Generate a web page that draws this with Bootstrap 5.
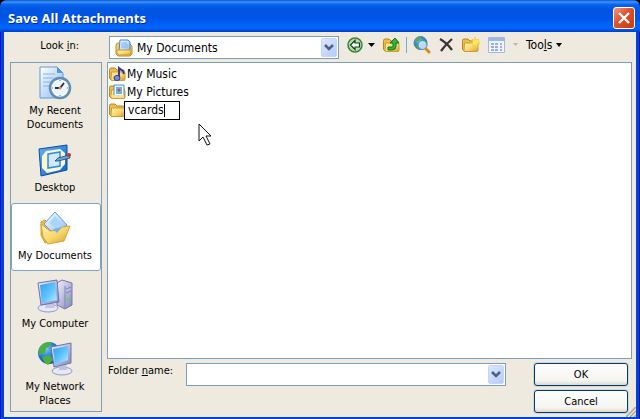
<!DOCTYPE html>
<html lang="en">
<head>
<meta charset="utf-8">
<meta name="viewport" content="width=device-width, initial-scale=1">
<title>Save All Attachments</title>
<link href="https://cdn.jsdelivr.net/npm/bootstrap@5.3.0/dist/css/bootstrap.min.css" rel="stylesheet">
<style>
body{background:#000;font-family:Tahoma,"DejaVu Sans Condensed","Noto Sans",sans-serif;font-size:11px;line-height:14px;color:#000}
svg{display:block;flex:none}
u{text-underline-offset:1px}
.dialog-frame{background:#0441d8;border-radius:7px 7px 0 0;padding:0 4px 4px;box-shadow:inset 1px 0 #0019cf,inset -1px -1px #00138c}
.title-strip{height:32px;margin:0 -4px;padding:3px 5px 0 8px;border-radius:7px 7px 0 0;background:linear-gradient(#0b52c8 0,#3d95ff 6%,#0a65ee 14%,#0055e1 28%,#0054e3 55%,#0062fb 78%,#0066ff 88%,#0049d3 97%,#003dca 100%)}
.title-strip h1{font-size:13px;line-height:18px;font-weight:700;color:#fff;text-shadow:1px 1px #0b2d86;font-family:"Noto Sans",sans-serif}
.close-btn{width:22px;height:22px;border:1px solid #fff;border-radius:3px;background:linear-gradient(135deg,#ee9a82,#e0502c 45%,#c93a12);padding:3px}
.dialog-face{background:#eeeadf}
.look-row{height:30px;padding-top:4px}
.look-label{width:105px;padding:3px 30px 0 0}
.combo{border:1px solid #7f9db9;background:#fff;height:23px;padding:1px}
.combo select{appearance:none;border:0;background:none;outline:0;min-width:0;padding:0;font-size:12px}
.look-combo{width:230px}
.drop{width:16px;height:19px;border-radius:2px;background:linear-gradient(135deg,#dce7ff,#b6cbfa);border:1px solid #c6d5f8;pointer-events:none}
.tool{border:0;background:none;padding:0;color:#000;font-size:12px}
.bar-rule{width:1px;height:16px;background:#7ba7e0;margin:0 6px}
.places{width:92px;border:1px solid #7f9db9;margin-left:6px;margin-bottom:5px}
.place{border:1px solid transparent;border-radius:3px;padding:0 2px 0 0;min-height:68px;color:#000;text-decoration:none;text-align:center}
.place.chosen{background:#fff;border-color:#7fa6c4}
.files{border:1px solid #7f9db9;background:#fff;padding:2px 1px;min-height:297px;font-size:12px}
.file-row{height:18px}
.rename{width:56px;height:19px;border:1px solid #000;background:#fff;padding-left:3px}
.rename input{width:36px;border:0;padding:0;outline:0;background:none;caret-color:transparent}
.caret-bar{width:1px;height:13px;background:#000}
.pointer{position:absolute;left:90px;top:60px}
.right-pane{margin:0 4px 0 5px}
.name-label{width:79px;padding:1px 0 0 1px}
.act{height:23px;width:94px;border:1px solid #003c74;border-radius:3px;background:linear-gradient(#fff,#f5f4ef 80%,#dcd8cc);padding:0;box-shadow:0 0 0 1px #a9bccd66}
.grip{position:absolute;right:0;bottom:0}
</style>
<script src="https://cdn.jsdelivr.net/npm/bootstrap@5.3.0/dist/js/bootstrap.bundle.min.js"></script>
</head>
<body>
<svg width="0" height="0" class="position-absolute" aria-hidden="true"><defs>
<linearGradient id="gold" x1="0" y1="0" x2="1" y2="1"><stop stop-color="#fff5b4"/><stop offset=".55" stop-color="#f9d66c"/><stop offset="1" stop-color="#d79b25"/></linearGradient>
<linearGradient id="screen" x1="0" y1="0" x2="1" y2="1"><stop stop-color="#2f9ff2"/><stop offset=".55" stop-color="#62c5fc"/><stop offset="1" stop-color="#b8f0ff"/></linearGradient>
<linearGradient id="paper" x1="0" y1="0" x2="1" y2="1"><stop stop-color="#fff"/><stop offset="1" stop-color="#88baf4"/></linearGradient>
<linearGradient id="blue" x1="0" y1="0" x2="1" y2="1"><stop stop-color="#62b3f4"/><stop offset="1" stop-color="#0862cc"/></linearGradient>
<linearGradient id="case" x1="0" y1="0" x2="1" y2="1"><stop stop-color="#f1f1fd"/><stop offset="1" stop-color="#8587bd"/></linearGradient>
<radialGradient id="sea" cx=".35" cy=".3" r=".75"><stop stop-color="#83cdff"/><stop offset=".5" stop-color="#247fe4"/><stop offset="1" stop-color="#113d9f"/></radialGradient>
<g id="folder"><path d="M.5 3.500q0-1.500 1.500-1.500h4l2 2h6q1.500 0 1.500 1.500v8.500H2L.5 12.500z" fill="#eebd4d" stroke="#b98522"/><path d="M2.500 6h12q1.500 0 1.500 1v6q0 1.500-1.500 1.500H3q-1 0-1-1z" fill="url(#gold)" stroke="#d09a30"/></g>
<path id="chevron" d="M1 1l4 4 4-4" fill="none" stroke="#4d6185" stroke-width="2.500"/>
</defs></svg>

<main class="dialog-frame min-vh-100 d-flex flex-column">
  <header class="title-strip d-flex align-items-center justify-content-between">
    <h1 class="m-0">Save All Attachments</h1>
    <button class="close-btn" type="button" aria-label="Close"><svg width="14" height="14" viewBox="0 0 14 14"><path d="M2 2l10 10M12 2L2 12" stroke="#fff" stroke-width="2.400"/></svg></button>
  </header>

  <div class="dialog-face position-relative flex-grow-1 d-flex flex-column">
    <div class="look-row d-flex">
      <label class="look-label text-end" for="look">Look <u>i</u>n:</label>
      <div class="combo look-combo d-flex align-items-center">
        <svg class="ms-1 me-1" width="18" height="18" viewBox="0 0 18 18"><path d="M1 7q0-3 2-3h11l3 3v8l-2 2H3l-2-2z" fill="#f6ce61" stroke="#bd8c2a"/><path d="M5 1h8l2 2v9H4z" fill="url(#paper)" stroke="#3c86d8"/><path d="M6 4h6M6 6h7M6 8h7" stroke="#80b5ee"/><path d="M2 11h13q2 0 1 2l-1 3H4q-1 0-2-2z" fill="url(#gold)" stroke="#d09a30"/></svg>
        <select id="look" class="flex-grow-1"><option>My Documents</option></select>
        <span class="drop d-flex align-items-center justify-content-center"><svg width="10" height="7"><use href="#chevron"/></svg></span>
      </div>
      <div class="d-flex align-items-center pb-2" role="toolbar" aria-label="Navigation">
        <button class="tool ms-2 d-flex align-items-center" type="button" aria-label="Back"><svg width="17" height="16" viewBox="0 0 17 16"><circle cx="8" cy="8" r="7" fill="#b7dcae" stroke="#358438" stroke-width="1.500"/><path d="M3.500 8L8 3.500V6h4.500v4H8v2.500z" fill="#fff" stroke="#173d18" stroke-width="1.200"/></svg><svg class="ms-1" width="7" height="4"><path d="M0 0h7L3.500 4z"/></svg></button>
        <button class="tool ms-2" type="button" aria-label="Up one level"><svg width="17" height="16" viewBox="0 0 17 16"><use href="#folder"/><path d="M5 13h4q4 0 4-4V6h3l-4-5-5 5h3v3q0 1-1 1H5z" fill="#37b33b" stroke="#13751c"/></svg></button>
        <span class="bar-rule"></span>
        <button class="tool" type="button" aria-label="Search the Web"><svg width="18" height="18" viewBox="0 0 18 18"><circle cx="7.500" cy="7" r="6.500" fill="url(#sea)" stroke="#4c83b5"/><path d="M2 4q3-4 6-3l-1 3-3 2zM10 2l3 3v3l-3-1zM2 8l4 1 1 4-3-1z" fill="#55ad3f"/><circle cx="9.500" cy="9" r="4.500" fill="#d3ecff" fill-opacity=".85" stroke="#5383af"/><path d="M13 13l3 3" stroke="#d78921" stroke-width="3" stroke-linecap="round"/></svg></button>
        <button class="tool ms-2" type="button" aria-label="Delete"><svg width="15" height="16" viewBox="0 0 15 16"><path d="M1 2q7 4 12 11M13 2Q7 7 2 14" fill="none" stroke="#343434" stroke-width="2.200"/></svg></button>
        <button class="tool ms-2" type="button" aria-label="New folder"><svg width="18" height="16" viewBox="0 0 18 16"><use href="#folder"/><path d="M13 0l1 3 3-1-1 3 2 1-3 1 1 3-3-2-2 2v-3l-3-1 3-1-1-3 3 1z" fill="#ffe95a" stroke="#f2bd27" stroke-width=".5"/></svg></button>
        <button class="tool ms-2 d-flex align-items-center" type="button" aria-label="Views"><svg width="17" height="16" viewBox="0 0 17 16"><path d="M.5.500h16v15H.5z" fill="#eff4ff" stroke="#a5b9df"/><path d="M1 1h15v3H1z" fill="#9bb8ec"/><path d="M3 7h3M7 7h3M12 7h2M3 10h3M7 10h3M12 10h2M3 13h3M7 13h3M12 13h2" stroke="#8099ca" stroke-width="1.500"/></svg><svg class="ms-2" width="5" height="4"><path d="M0 0h5L2.500 3z" fill="#bbb8ae"/></svg></button>
        <button class="tool ms-2 d-flex align-items-center" type="button"><span>Too<u>l</u>s</span><svg class="ms-1" width="6" height="4"><path d="M0 0h6L3 4z"/></svg></button>
      </div>
    </div>

    <div class="d-flex flex-grow-1">
      <nav class="places d-flex flex-column" aria-label="Places">
        <a href="#" class="place flex-fill d-flex flex-column align-items-center justify-content-center gap-1">
          <svg width="34" height="34" viewBox="0 0 34 34"><path d="M2 1h17l6 6v25H2z" fill="url(#paper)" stroke="#639ad6"/><path d="M19 1v6h6z" fill="#4f9ce9"/><path d="M5 8h12M5 12h10M5 16h8M5 20h6" stroke="#82b3e8"/><circle cx="22" cy="22" r="10" fill="#e8f4ff" stroke="#668cae" stroke-width="2.500"/><circle cx="22" cy="22" r="7.500" fill="none" stroke="#fff"/><path d="M26 17l-4 5h-5" fill="none" stroke="#19304b" stroke-width="1.800"/><path d="M22 14v1M22 29v1M14 22h1M29 22h1" stroke="#3976ac"/><circle cx="22" cy="22" r="1.500" fill="#ed8a27"/></svg>
          <span>My Recent<br>Documents</span></a>
        <a href="#" class="place flex-fill d-flex flex-column align-items-center justify-content-center gap-1">
          <svg width="34" height="34" viewBox="0 0 34 34"><path d="M1 6l28-4v25L3 33z" fill="url(#blue)" stroke="#0b4c9d"/><path d="M8 8l14-2 5 4v11l-5 6-13 3-5-5V13z" fill="#fff5cd"/><path d="M10 11l12-2v14l-12 2z" fill="#cfeaff" stroke="#2c8ce1" stroke-width="1.500"/><path d="M17 18l3-3 11-3 1 3-12 3z" fill="#69a9e4" stroke="#253d63" stroke-width=".8"/><circle cx="31" cy="12" r="2" fill="#cf3027"/></svg>
          <span>Desktop</span></a>
        <a href="#" class="place chosen flex-fill d-flex flex-column align-items-center justify-content-center gap-1" aria-current="page">
          <svg width="34" height="34" viewBox="0 0 34 34"><path d="M3 11l4-2 3 3 11 3-2 13-12 4-4-8z" fill="#eebb48" stroke="#d39a2a"/><path d="M17 1l12 13-12 10L6 13z" fill="url(#paper)" stroke="#5b9fe5"/><path d="M17 5l6 7-5 5-7-5z" fill="#a9d5fa"/><path d="M3 13l9 7 9-1 3-3 8-1-6 15-16 3-5-7z" fill="url(#gold)" stroke="#d7a038"/><path d="M15 18l9-2-5 6z" fill="#70b4ec"/></svg>
          <span class="text-nowrap">My Documents</span></a>
        <a href="#" class="place flex-fill d-flex flex-column align-items-center justify-content-center gap-1">
          <svg width="36" height="34" viewBox="0 0 36 34"><path d="M20 4l5-3 10 3v22l-7 4-8-4z" fill="url(#case)" stroke="#7476a9"/><path d="M28 7v22M29 10l5-2M29 14l5-2" stroke="#8083b8"/><circle cx="31" cy="20" r="1.500" fill="#5bdb55"/><ellipse cx="11" cy="29" rx="10" ry="4" fill="#e6e7f7" stroke="#9799c6"/><path d="M9 24h7l2 5H8z" fill="#c4c5e2"/><path d="M1 4l19-3 2 22-18 3z" fill="url(#case)" stroke="#6f73aa"/><path d="M3 6l15-3 2 18-15 3z" fill="url(#screen)"/></svg>
          <span>My Computer</span></a>
        <a href="#" class="place flex-fill d-flex flex-column align-items-center justify-content-center gap-1">
          <svg width="36" height="35" viewBox="0 0 36 35"><circle cx="12" cy="12" r="11" fill="url(#sea)"/><path d="M2 7q5-7 13-6l-3 5-3 1-1 5-6 2zM5 16l8-2 3 5-5 5q-5-3-6-8z" fill="#4bb13a"/><ellipse cx="25" cy="30" rx="10" ry="4" fill="#e6e7f7" stroke="#9799c6"/><path d="M22 23h7l1 6h-8z" fill="#bfc0df"/><path d="M14 6l20-4v20l-17 4z" fill="url(#case)" stroke="#6f73aa"/><path d="M16 8l15-3v14l-13 4z" fill="url(#screen)"/></svg>
          <span class="text-nowrap">My Network<br>Places</span></a>
      </nav>

      <section class="right-pane flex-grow-1 d-flex flex-column">
        <div class="files position-relative flex-grow-1">
          <div class="file-row d-flex align-items-center"><svg width="18" height="17" viewBox="0 0 18 17"><use href="#folder"/><path d="M10 12V2l4 3 1 3" fill="none" stroke="#363b96" stroke-width="2"/><ellipse cx="8" cy="12" rx="3" ry="2.500" fill="#7b8ce8" stroke="#363b96"/></svg><span>My Music</span></div>
          <div class="file-row d-flex align-items-center"><svg width="18" height="17" viewBox="0 0 18 17"><use href="#folder"/><path d="M5 1h10v12H5z" fill="#f7fcff" stroke="#4b91cf"/><path d="M7 3h6v7H7z" fill="#67b5f0"/><circle cx="10" cy="6" r="1.500" fill="#d94d38"/><path d="M2 11h13v3H3z" fill="#fae08b"/></svg><span>My Pictures</span></div>
          <div class="file-row d-flex align-items-center"><svg width="15" height="17" viewBox="0 0 15 17"><use href="#folder"/></svg><div class="rename d-flex align-items-center"><input type="text" value="vcards" aria-label="Folder name in list"><span class="caret-bar"></span></div></div>
          <svg class="pointer" width="14" height="24" viewBox="0 0 14 24"><path d="M1 1v17l4-4 4 8 3-1-4-8h5z" fill="#fff" stroke="#111"/></svg>
        </div>
        <div class="d-flex pt-1 pb-1">
          <label class="name-label" for="fname">Folder <u>n</u>ame:</label>
          <div class="combo flex-grow-1 d-flex align-items-center"><select id="fname" class="flex-grow-1"><option></option></select><span class="drop d-flex align-items-center justify-content-center"><svg width="10" height="7"><use href="#chevron"/></svg></span></div>
          <div class="d-flex flex-column gap-1 ps-4 ms-1 pe-1"><button class="act" type="button">OK</button><button class="act" type="button">Cancel</button></div>
        </div>
      </section>
    </div>
    <svg class="grip" width="10" height="10"><path d="M0 10L10 0M4 10l6-6M8 10l2-2" stroke="#aaa58f" stroke-width="1.500"/></svg>
  </div>
</main>
</body>
</html>
